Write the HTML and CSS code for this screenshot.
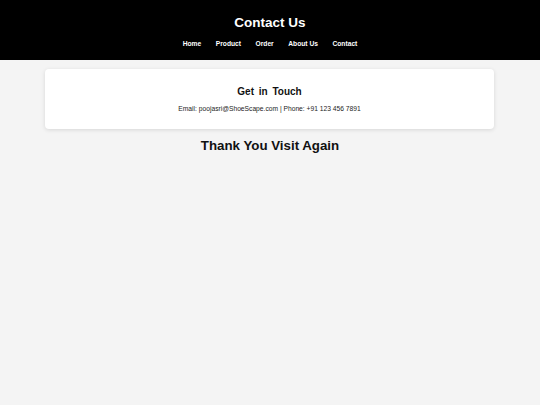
FILE: index.html
```html
<!DOCTYPE html>
<html lang="en">
<head>
	<title>Contact Us</title>
	<meta charset="utf-8">
	<meta name="viewport" content="width=device-width, initial-scale=1">
	<link rel="stylesheet" href="styles.css">
</head>
<body>
	<header class="top">
		<h1>Contact Us</h1>
		<nav class="menu">
			<a href="#">Home</a>
			<a href="#">Product</a>
			<a href="#">Order</a>
			<a href="#">About Us</a>
			<a href="#">Contact</a>
		</nav>
	</header>

	<section class="card">
		<h2>Get in Touch</h2>
		<p>Email: poojasri@ShoeScape.com | Phone: +91 123 456 7891</p>
	</section>

	<h3 class="thanks">Thank You Visit Again</h3>
</body>
</html>
```

FILE: styles.css
```css
body {
	margin: 0;
	padding: 0;
	font-family: "Liberation Sans", Arial, sans-serif;
	background: #f4f4f4;
	color: #111;
}
.top {
	background: #000;
	color: #fff;
	text-align: center;
	height: 60px;
	padding-top: 15px;
	box-sizing: border-box;
}
.top h1 {
	margin: 0;
	font-size: 13.5px;
	line-height: 16px;
}
.menu {
	display: flex;
	justify-content: center;
	gap: 14.5px;
	margin-top: 9px;
}
.menu a {
	color: #fff;
	text-decoration: none;
	font-weight: bold;
	font-size: 6.7px;
	line-height: 8px;
}
.card {
	background: #fff;
	margin: 9px 46px 0 45px;
	height: 60px;
	box-sizing: border-box;
	padding-top: 17px;
	border-radius: 4px;
	box-shadow: 0 1px 4px rgba(0, 0, 0, 0.12);
	text-align: center;
}
.card h2 {
	margin: 0;
	font-size: 10px;
	line-height: 12px;
	word-spacing: 2px;
}
.card p {
	margin: 7px 0 0;
	font-size: 6.7px;
	line-height: 8px;
	color: #222;
}
.thanks {
	margin: 9px 0 0;
	text-align: center;
	font-size: 13.3px;
	line-height: 16px;
}
```
